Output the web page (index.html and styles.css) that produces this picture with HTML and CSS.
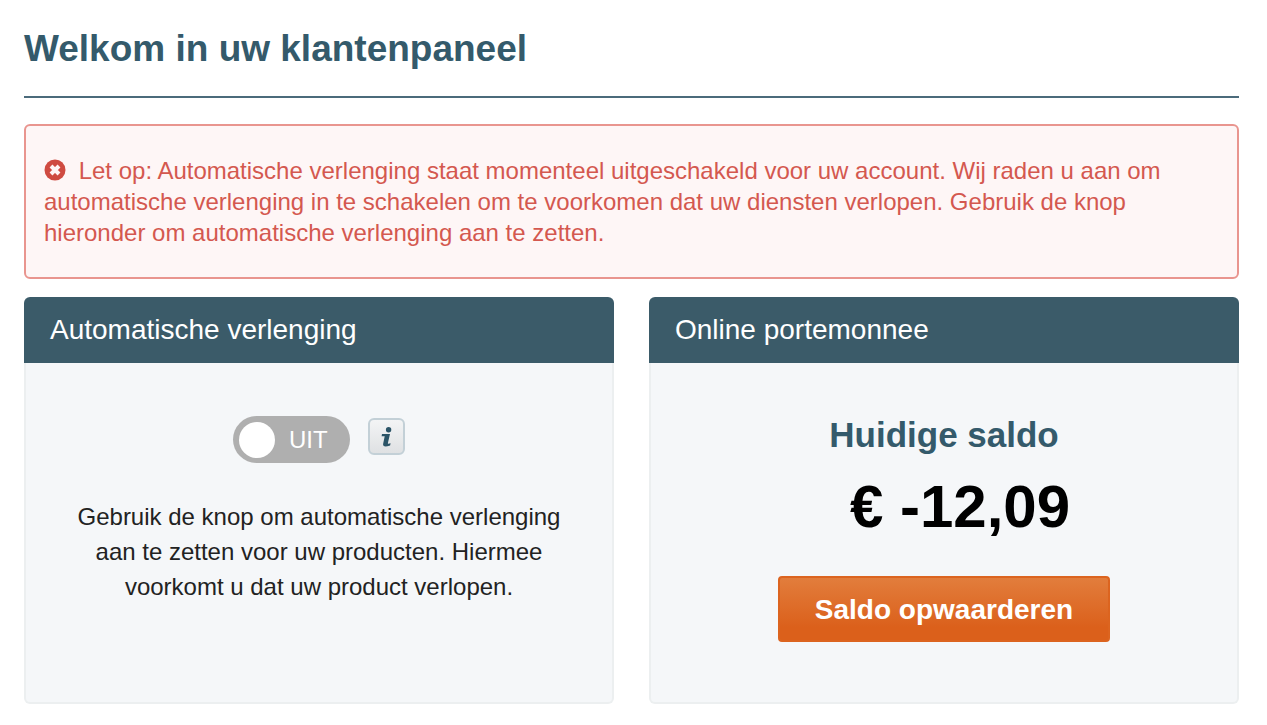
FILE: index.html
```html
<!DOCTYPE html>
<html lang="nl">
<head>
  <meta charset="UTF-8" />
  <meta name="viewport" content="width=device-width, initial-scale=1.0" />
  <title>Klantenpaneel</title>
  <link rel="stylesheet" href="styles.css">
</head>
<body>
  <main class="container">
    <h1 class="page-title">Welkom in uw klantenpaneel</h1>

    <div class="alert" role="alert">
      <svg class="alert-icon" viewBox="0 0 22 22" aria-hidden="true">
        <circle cx="11" cy="11" r="10.5" fill="#cf4b41" />
        <path d="M7 7l8 8M15 7l-8 8" stroke="#fff6f6" stroke-width="4" />
      </svg>
      Let op: Automatische verlenging staat momenteel uitgeschakeld voor uw account. Wij raden u aan om automatische verlenging in te schakelen om te voorkomen dat uw diensten verlopen. Gebruik de knop hieronder om automatische verlenging aan te zetten.
    </div>

    <div class="cards">
      <section class="card">
        <h2 class="card-header">Automatische verlenging</h2>
        <div class="card-body">
          <div class="renewal">
            <label class="switch">
              <input type="checkbox" role="switch" class="switch-input" />
              <span class="switch-label">UIT</span>
            </label>
            <button type="button" class="info" aria-label="Informatie">
              <svg class="info-icon" viewBox="0 0 12 20" aria-hidden="true">
                <circle cx="7.6" cy="2.8" r="2.7" />
                <path d="M1 7h8L6.9 16q-.2 1.2 2.7.2l-.5 2.3q-7.6 2.6-7-1.6L3.7 9.2H.6z" />
              </svg>
            </button>
          </div>
          <p class="renewal-text">Gebruik de knop om automatische verlenging aan te zetten voor uw producten. Hiermee voorkomt u dat uw product verlopen.</p>
        </div>
      </section>

      <section class="card">
        <h2 class="card-header">Online portemonnee</h2>
        <div class="card-body">
          <h3 class="balance-title">Huidige saldo</h3>
          <div class="balance">€ -12,09</div>
          <button type="button" class="topup">Saldo opwaarderen</button>
        </div>
      </section>
    </div>
  </main>
</body>
</html>
```

FILE: styles.css
```css
* {
  box-sizing: border-box;
}

body {
  margin: 0;
  font-family: "Liberation Sans", Arial, sans-serif;
  font-size: 24px;
  color: #222;
  background: #fff;
}

.container {
  padding: 24px 28px 20px 24px;
}

.page-title {
  margin: 0 0 26px;
  padding-bottom: 22px;
  border-bottom: 2px solid #4b6b7b;
  font-size: 37px;
  line-height: 50px;
  color: #345a6b;
}

.alert {
  margin-bottom: 18px;
  padding: 29px 28px 29px 18px;
  border: 2px solid #e9958f;
  border-radius: 6px;
  background: #fef6f6;
  color: #d4584f;
  line-height: 31px;
}

.alert-icon {
  width: 22px;
  height: 22px;
  margin-right: 6px;
  vertical-align: -2px;
}

.cards {
  display: flex;
  gap: 35px;
}

.card {
  flex: 1;
  display: flex;
  flex-direction: column;
  min-height: 407px;
}

.card-header {
  margin: 0;
  padding: 0 26px;
  border-radius: 6px 6px 0 0;
  background: #3b5b69;
  color: #fff;
  font-size: 28px;
  font-weight: normal;
  line-height: 66px;
}

.card-body {
  flex: 1;
  padding: 50px 44px;
  border: 2px solid #eceff0;
  border-top: 0;
  border-radius: 0 0 6px 6px;
  background: #f5f7f9;
  text-align: center;
}

.renewal {
  display: flex;
  justify-content: center;
  align-items: center;
  gap: 18px;
  padding-top: 3px;
}

.switch {
  display: flex;
  align-items: center;
  gap: 14px;
  width: 117px;
  height: 47px;
  padding: 0 6px;
  border-radius: 24px;
  background: #afafaf;
  color: #fff;
  cursor: pointer;
}

.switch-input {
  appearance: none;
  width: 36px;
  height: 36px;
  margin: 0;
  border-radius: 50%;
  background: #fff;
  cursor: pointer;
}

.info {
  display: flex;
  justify-content: center;
  align-items: center;
  width: 37px;
  height: 37px;
  margin-bottom: 6px;
  padding: 0;
  border: 2px solid #c3d0d7;
  border-radius: 6px;
  background: linear-gradient(#f3f4f5, #dfe1e3);
  cursor: pointer;
}

.info-icon {
  width: 12px;
  height: 20px;
  fill: #2b5467;
}

.renewal-text {
  margin: 36px 0 0;
  line-height: 35px;
}

.balance-title {
  margin: 0;
  color: #345a6b;
  font-size: 35px;
  line-height: 44px;
}

.balance {
  padding-left: 32px;
  color: #000;
  font-size: 60px;
  font-weight: bold;
  line-height: 100px;
}

.topup {
  height: 66px;
  margin-top: 19px;
  padding: 2px 35px 0;
  border: 2px solid #dc641f;
  border-radius: 4px;
  background: linear-gradient(#e27d3c, #db601b 80%);
  color: #fff;
  font-family: inherit;
  font-size: 28px;
  font-weight: bold;
  cursor: pointer;
}
```
